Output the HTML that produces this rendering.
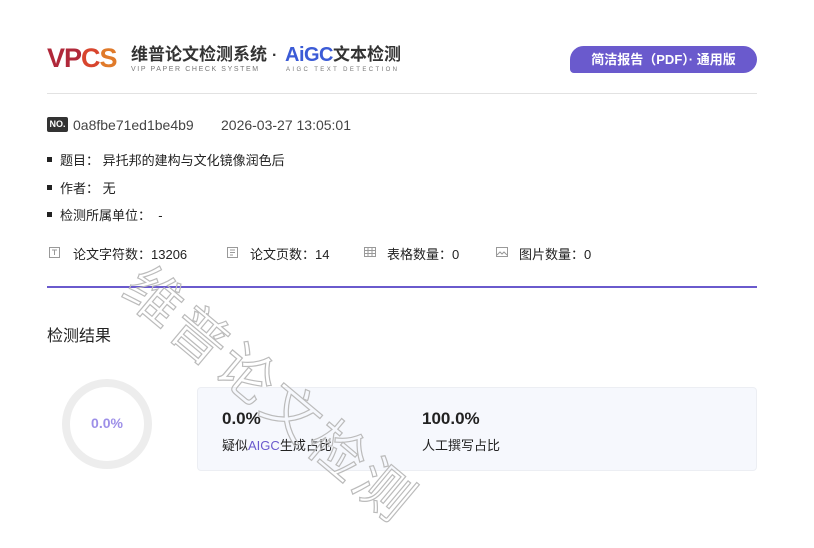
<!DOCTYPE html>
<html><head><meta charset="utf-8"><style>
*{margin:0;padding:0;box-sizing:border-box}
body{width:814px;height:548px;background:#fff;font-family:"Liberation Sans","Noto Sans CJK SC",sans-serif;color:#222;position:relative;overflow:hidden}
.a{position:absolute;white-space:nowrap}
.f13{font-size:13px}
</style></head><body>
<!-- logo -->
<div class="a" style="left:47px;top:43px;font-size:27px;font-weight:bold;letter-spacing:-1px;line-height:30px"><span style="color:#b0283a">VP</span><span style="color:#d8452e">C</span><span style="color:#e07a2a">S</span></div>
<div class="a" style="left:131px;top:45px;font-size:17px;font-weight:bold;color:#333;line-height:20px">维普论文检测系统</div>
<div class="a" style="left:131px;top:66px;font-size:7px;color:#777;letter-spacing:1.6px">VIP PAPER CHECK SYSTEM</div>
<div class="a" style="left:272px;top:47px;font-size:16px;font-weight:bold;color:#333">·</div>
<div class="a" style="left:285px;top:44px;font-size:20px;font-weight:bold;color:#3b5bd6;line-height:22px;letter-spacing:-0.5px">AiGC</div>
<div class="a" style="left:333px;top:45px;font-size:17px;font-weight:bold;color:#333;line-height:20px">文本检测</div>
<div class="a" style="left:286px;top:67px;font-size:6px;color:#777;letter-spacing:2.4px">AIGC TEXT DETECTION</div>
<div class="a" style="left:570px;top:46px;width:187px;height:27px;background:#6a5acd;border-radius:14px 14px 14px 4px;color:#fff;font-size:13px;font-weight:bold;line-height:27px;text-align:center">简洁报告（PDF）· 通用版</div>
<div class="a" style="left:47px;top:93px;width:710px;height:1px;background:#e2e2e2"></div>
<!-- no -->
<div class="a" style="left:47px;top:117px;width:21px;height:15px;background:#333;border-radius:2px;color:#fff;font-size:9px;font-weight:bold;line-height:15px;text-align:center">NO.</div>
<div class="a f13" style="left:73px;top:117px;color:#444;font-size:14px">0a8fbe71ed1be4b9</div>
<div class="a" style="left:221px;top:117px;color:#444;font-size:14px">2026-03-27 13:05:01</div>
<div class="a f13" style="left:47px;top:152px;line-height:18px"><span style="display:inline-block;width:5px;height:5px;background:#222;margin-right:8px;vertical-align:3px"></span>题目：&nbsp;异托邦的建构与文化镜像润色后</div>
<div class="a f13" style="left:47px;top:180px;line-height:18px"><span style="display:inline-block;width:5px;height:5px;background:#222;margin-right:8px;vertical-align:3px"></span>作者：&nbsp;无</div>
<div class="a f13" style="left:47px;top:207px;line-height:18px"><span style="display:inline-block;width:5px;height:5px;background:#222;margin-right:8px;vertical-align:3px"></span>检测所属单位：&nbsp;&nbsp;-</div>
<!-- stats -->
<svg class="a" style="left:48px;top:246px" width="13" height="13" viewBox="0 0 13 13" fill="none" stroke="#999"><rect x="1.5" y="1.5" width="10" height="10"/><path d="M4 4h5M6.5 4v5"/></svg>
<div class="a f13" style="left:73px;top:244px">论文字符数：13206</div>
<svg class="a" style="left:226px;top:246px" width="13" height="13" viewBox="0 0 13 13" fill="none" stroke="#999"><rect x="1.5" y="1.5" width="10" height="10"/><path d="M4 4h5M4 6.5h5M4 9h3"/></svg>
<div class="a f13" style="left:250px;top:244px">论文页数：14</div>
<svg class="a" style="left:363px;top:246px" width="14" height="12" viewBox="0 0 14 12" fill="none" stroke="#999"><rect x="1.5" y="1.5" width="11" height="9"/><path d="M1.5 4.5h11M1.5 7.5h11M5 1.5v9M9 1.5v9"/></svg>
<div class="a f13" style="left:387px;top:244px">表格数量：0</div>
<svg class="a" style="left:495px;top:246px" width="14" height="12" viewBox="0 0 14 12" fill="none" stroke="#999"><rect x="1.5" y="1.5" width="11" height="9"/><path d="M2 9l3-3 2 2 2-2 3 3"/></svg>
<div class="a f13" style="left:519px;top:244px">图片数量：0</div>
<div class="a" style="left:47px;top:286px;width:710px;height:2px;background:#6a5acd"></div>
<div class="a" style="left:47px;top:322px;font-size:16px;color:#222">检测结果</div>
<!-- donut -->
<div class="a" style="left:62px;top:379px;width:90px;height:90px;border-radius:50%;border:8px solid #ededed"></div>
<div class="a" style="left:62px;top:415px;width:90px;text-align:center;font-size:14px;font-weight:bold;color:#9d8fe8">0.0%</div>
<div class="a" style="left:197px;top:387px;width:560px;height:84px;background:#f6f8fd;border:1px solid #eceef3;border-radius:4px"></div>
<div class="a" style="left:222px;top:409px;font-size:17px;font-weight:bold;color:#222">0.0%</div>
<div class="a f13" style="left:222px;top:435px">疑似<span style="color:#6a5acd">AIGC</span>生成占比</div>
<div class="a" style="left:422px;top:409px;font-size:17px;font-weight:bold;color:#222">100.0%</div>
<div class="a f13" style="left:422px;top:435px">人工撰写占比</div>
<!-- watermark -->
<div class="a" style="left:80px;top:360px;font-size:56px;line-height:70px;color:transparent;-webkit-text-stroke:1.2px #bbb;transform:rotate(40deg);transform-origin:50% 50%;width:380px;text-align:center;letter-spacing:4px">维普论文检测</div>
</body></html>
